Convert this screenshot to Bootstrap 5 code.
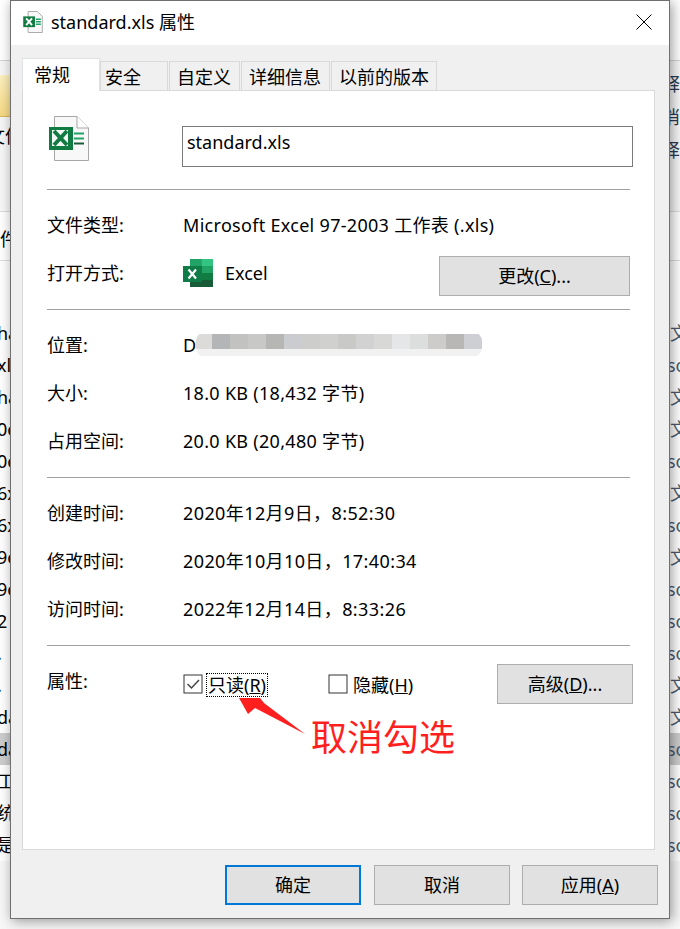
<!DOCTYPE html>
<html lang="zh-CN">
<head>
  <meta charset="UTF-8">
  <title>standard.xls 属性</title>
  <link href="https://cdn.jsdelivr.net/npm/bootstrap@5.3.3/dist/css/bootstrap.min.css" rel="stylesheet">
  <style>
    body { margin: 0; width: 680px; height: 929px; overflow: hidden; background: #f7f7f7; color: #000; font-family: "Noto Sans", "Noto Sans CJK SC", sans-serif; font-size: 18px; line-height: 24px; }
    .side-strip { width: 10px; height: 929px; overflow: hidden; white-space: nowrap; background: #f7f7f7; }
    .ribbon-top { height: 61px; background: #fff; border-bottom: 1px solid #d4d4d4; }
    .ribbon-tools { height: 151px; background: #f7f7f7; border-bottom: 1px solid #dcdcdc; padding-top: 10px; }
    .strip-right .ribbon-tools { padding-top: 7px; }
    .ribbon-yellow { height: 42px; margin-top: 4px; background: linear-gradient(#fdf0c0, #f6d982); border-bottom: 1px solid #d9b860; }
    .ribbon-name { margin: 7px 0 0 -13px; }
    .ribbon-text { height: 33px; line-height: 33px; color: #2b3b55; margin-left: -8px; }
    .path-bar { height: 49px; background: #fff; border-bottom: 1px solid #dcdcdc; line-height: 54px; }
    .list-head { height: 56px; background: #fff; }
    .list-row { height: 32px; line-height: 32px; background: #fff; margin-left: -3px; padding-right: 3px; }
    .list-row.on { background: #cdcdcd; }
    .strip-right .list-row { color: #4c5a6e; margin-left: 0; padding-left: 0; }
    .strip-right .list-row.so { margin-left: -3px; }
    .dialog-win { width: 660px; height: 919px; border: 1px solid #6f6f6f; background: #f0f0f0; box-shadow: 2px 2px 12px rgba(0,0,0,.4); position: relative; z-index: 2; }
    .title-bar { height: 44px; background: #fff; padding: 0 17px 2px 12px; }
    .title-text { margin-left: 8px; }
    .tab-strip { height: 45px; padding-left: 11px; border: 0; align-items: flex-end; }
    .tab-strip .nav-link { height: 29px; margin: 0 1px 0 0; padding: 0 0 0 7px; border: 1px solid #d9d9d9; border-bottom: 0; border-radius: 0; background: #f0f0f0; color: #000; line-height: 31px; text-align: left; }
    .tab-strip .nav-link.active { height: 33px; background: #fff; color: #000; line-height: 33px; position: relative; top: 1px; z-index: 1; margin-right: 0; padding-left: 11px; }
    .tab-a { width: 78px; }
    .tab-b { width: 68px; }
    .tab-strip .tab-b { padding-left: 4px; }
    .tab-c { width: 71px; }
    .tab-d { width: 89px; }
    .tab-e { width: 106px; }
    .prop-panel { width: 633px; height: 760px; margin-left: 11px; background: #fff; border: 1px solid #d9d9d9; padding: 0 24px; position: relative; }
    .head-row { height: 98px; padding-top: 25px; }
    .head-icon { margin-left: 2px; margin-right: 93px; }
    .name-box { width: 451px; height: 41px; margin-top: 10px; margin-right: -3px; border: 1px solid #7a7a7a; padding: 3px 4px; }
    .rule-line { height: 1px; background: #a0a0a0; }
    .prop-group { padding: 11px 0 12px; }
    .prop-row { height: 48px; }
    .prop-label { width: 136px; flex: none; }
    .prop-value { letter-spacing: .3px; }
    .prop-date { letter-spacing: .4px; }
    .app-icon { margin-right: 13px; }
    .excel-name { margin-left: -1px; }
    .win-btn { background: #e1e1e1; border: 1px solid #adadad; border-radius: 0; color: #000; padding: 0; height: 40px; font-size: 18px; line-height: 24px; }
    .win-btn:hover { background: #e1e1e1; border-color: #adadad; color: #000; }
    .btn-change { width: 191px; margin-left: auto; margin-top: 6px; }
    .btn-adv { width: 136px; margin-left: auto; margin-right: -3px; }
    .attr-row { height: 40px; margin-top: 18px; }
    .attr-label { align-self: flex-start; padding-top: 5px; }
    .tick-box { margin-right: 4px; flex: none; }
    .focus-dots { outline: 1px dotted #000; padding: 0 1px; line-height: 22px; margin-top: 2px; }
    .hide-text { margin: 2px 0 0 1px; }
    .hide-item { margin-left: 61px; }
    .note-red { margin: 12px 0 0 264px; color: #ff1f1f; font-size: 36px; line-height: 44px; }
    .note-arrow { position: absolute; left: -23px; top: -91px; pointer-events: none; }
    .foot-bar { height: 68px; padding: 15px 11px 0 0; gap: 13px; }
    .btn-foot { width: 136px; }
    .btn-last { margin-left: -1px; }
    .btn-main { border: 2px solid #0078d7; }
    .btn-main:hover { border-color: #0078d7; }
  </style>
</head>
<body>
  <div class="d-flex">
    <div class="side-strip">
      <div class="ribbon-top"></div>
      <div class="ribbon-tools">
        <div class="ribbon-yellow"></div>
        <div class="ribbon-name">文件</div>
      </div>
      <div class="path-bar">件</div>
      <div class="list-head"></div>
      <div id="leftRows"></div>
    </div>

    <div class="dialog-win">
      <div class="title-bar d-flex align-items-center">
        <svg width="20" height="22" viewBox="0 0 40 45">
          <path d="M10 1H29L39 11V44H10Z" fill="#f8f8f8" stroke="#aaa" stroke-width="2"/>
          <rect x="0" y="11" width="24" height="22" fill="#107c41"/>
          <path d="M6 15L18 29M18 15L6 29" stroke="#fff" stroke-width="4"/>
          <path d="M26 17H36M26 22H36M26 27H36" stroke="#21a366" stroke-width="3"/>
        </svg>
        <span class="title-text">standard.xls 属性</span>
        <svg class="ms-auto" width="16" height="16" viewBox="0 0 16 16"><path d="M.5.5L15.5 15.5M15.5.5L.5 15.5" stroke="#000" fill="none"/></svg>
      </div>

      <ul class="nav nav-tabs tab-strip">
        <li class="nav-item"><a class="nav-link active tab-a" href="#">常规</a></li>
        <li class="nav-item"><a class="nav-link tab-b" href="#">安全</a></li>
        <li class="nav-item"><a class="nav-link tab-c" href="#">自定义</a></li>
        <li class="nav-item"><a class="nav-link tab-d" href="#">详细信息</a></li>
        <li class="nav-item"><a class="nav-link tab-e" href="#">以前的版本</a></li>
      </ul>

      <div class="prop-panel">
        <div class="head-row d-flex align-items-start">
          <svg class="head-icon" width="40" height="45" viewBox="0 0 40 45">
            <path d="M5.500.5H28L39.500 12V44.500H5.500Z" fill="#f8f8f8" stroke="#a6a6a6"/>
            <path d="M28 .5V12H39.500" fill="#fff" stroke="#a6a6a6"/>
            <rect x="0" y="11" width="24" height="23" fill="#107c41"/>
            <rect x="3" y="14" width="16" height="16" fill="#f4f8f4"/>
            <path d="M5 15L18 29M18 15L5 29" stroke="#107c41" stroke-width="4"/>
            <path d="M25 17.500H35M25 22.500H35" stroke="#21a366" stroke-width="2"/>
            <path d="M25 27.500H35" stroke="#185c37" stroke-width="2"/>
          </svg>
          <div class="name-box flex-grow-1">standard.xls</div>
        </div>
        <div class="rule-line"></div>

        <div class="prop-group">
          <div class="prop-row d-flex align-items-center"><span class="prop-label">文件类型:</span><span class="prop-value">Microsoft Excel 97-2003 工作表 (.xls)</span></div>
          <div class="prop-row d-flex align-items-center">
            <span class="prop-label">打开方式:</span>
            <svg class="app-icon" width="30" height="28" viewBox="0 0 30 28">
              <rect x="7" width="23" height="28" fill="#107c41"/>
              <rect x="7" width="11.500" height="7" fill="#21a366"/>
              <rect x="18.500" width="11.500" height="7" fill="#33c481"/>
              <rect x="18.500" y="7" width="11.500" height="7" fill="#21a366"/>
              <rect x="7" y="21" width="23" height="7" fill="#185c37"/>
              <rect y="7" width="19" height="16" fill="#0f7b46"/>
              <path d="M5.500 10.500L13 19.500M13 10.500L5.500 19.500" stroke="#fff" stroke-width="2.200"/>
            </svg>
            <span class="excel-name">Excel</span>
            <button class="btn win-btn btn-change" type="button">更改(<u>C</u>)...</button>
          </div>
        </div>
        <div class="rule-line"></div>

        <div class="prop-group">
          <div class="prop-row d-flex align-items-center">
            <span class="prop-label">位置:</span><span>D</span>
            <svg id="mosaic" width="286" height="26" viewBox="0 0 286 26"></svg>
          </div>
          <div class="prop-row d-flex align-items-center"><span class="prop-label">大小:</span><span class="prop-value">18.0 KB (18,432 字节)</span></div>
          <div class="prop-row d-flex align-items-center"><span class="prop-label">占用空间:</span><span class="prop-value">20.0 KB (20,480 字节)</span></div>
        </div>
        <div class="rule-line"></div>

        <div class="prop-group">
          <div class="prop-row d-flex align-items-center"><span class="prop-label">创建时间:</span><span class="prop-date">2020年12月9日，8:52:30</span></div>
          <div class="prop-row d-flex align-items-center"><span class="prop-label">修改时间:</span><span class="prop-date">2020年10月10日，17:40:34</span></div>
          <div class="prop-row d-flex align-items-center"><span class="prop-label">访问时间:</span><span class="prop-date">2022年12月14日，8:33:26</span></div>
        </div>
        <div class="rule-line"></div>

        <div class="attr-row d-flex align-items-center">
          <span class="prop-label attr-label">属性:</span>
          <svg class="tick-box" width="20" height="20" viewBox="0 0 20 20"><rect x="1" y="1" width="18" height="18" fill="#fff" stroke="#333"/><path d="M4.500 10L8.500 14L16 6" fill="none" stroke="#444" stroke-width="1.500"/></svg>
          <span class="focus-dots">只读(<u>R</u>)</span>
          <svg class="tick-box hide-item" width="20" height="20" viewBox="0 0 20 20"><rect x="1" y="1" width="18" height="18" fill="#fff" stroke="#333"/></svg>
          <span class="hide-text">隐藏(<u>H</u>)</span>
          <button class="btn win-btn btn-adv" type="button">高级(<u>D</u>)...</button>
        </div>
        <div class="note-red">取消勾选</div>
        <svg class="note-arrow" width="633" height="760" viewBox="0 0 633 760">
          <polygon points="239,698 260,698 264,703 305,734 255,708 248,714" fill="#ff1f1f"/>
        </svg>
      </div>

      <div class="foot-bar d-flex justify-content-end">
        <button class="btn win-btn btn-foot btn-main" type="button">确定</button>
        <button class="btn win-btn btn-foot" type="button">取消</button>
        <button class="btn win-btn btn-foot btn-last" type="button">应用(<u>A</u>)</button>
      </div>
    </div>

    <div class="side-strip strip-right">
      <div class="ribbon-top"></div>
      <div class="ribbon-tools">
        <div class="ribbon-text">释</div>
        <div class="ribbon-text">消</div>
        <div class="ribbon-text">译</div>
      </div>
      <div class="path-bar"></div>
      <div class="list-head"></div>
      <div id="rightRows"></div>
    </div>
  </div>

  <script src="https://cdn.jsdelivr.net/npm/bootstrap@5.3.3/dist/js/bootstrap.bundle.min.js"></script>
  <script>
    const leftText = ["ha", "xl", "ha", "0e", "0e", "6x", "6x", "9e", "9e", " 2", " .", " .", "da", "da", " 工", "统", "是"];
    const rightText = ["文", "so", "文", "文", "so", "文", "so", "文", "so", "so", "so", "文", "文", "so", "so", "so", "so"];
    const selectedRow = 13;

    document.getElementById("leftRows").innerHTML = leftText.map((t, i) =>
      `<div class="list-row${i === selectedRow ? " on" : ""}">${t}</div>`).join("");
    document.getElementById("rightRows").innerHTML = rightText.map((t, i) =>
      `<div class="list-row${i === selectedRow ? " on" : ""}${t === "so" ? " so" : ""}">${t}</div>`).join("");

    // redaction blocks behind the file path
    const tones = ["#dcdbd9", "#b4b5b7", "#c2c2c1", "#c8c8c6", "#b6b6b4", "#cbccd0", "#cdcdcb", "#d0d0ce", "#c9c9c7", "#d2d2d2",
      "#d8d8d6", "#e4e6e7", "#dcdedd", "#cdccca", "#b8b7b5", "#cdcfd4"];
    const blocks = tones.map((c, i) =>
      `<rect x="${i * 18 - 2}" y="2" width="18" height="15" fill="${c}"/><rect x="${i * 18 - 2}" y="17" width="18" height="7" fill="#f1f1f1"/>`).join("");
    document.getElementById("mosaic").innerHTML =
      `<clipPath id="mosaicEdge"><rect width="286" height="25" rx="9"/></clipPath><g clip-path="url(#mosaicEdge)">${blocks}</g>`;
  </script>
</body>
</html>
